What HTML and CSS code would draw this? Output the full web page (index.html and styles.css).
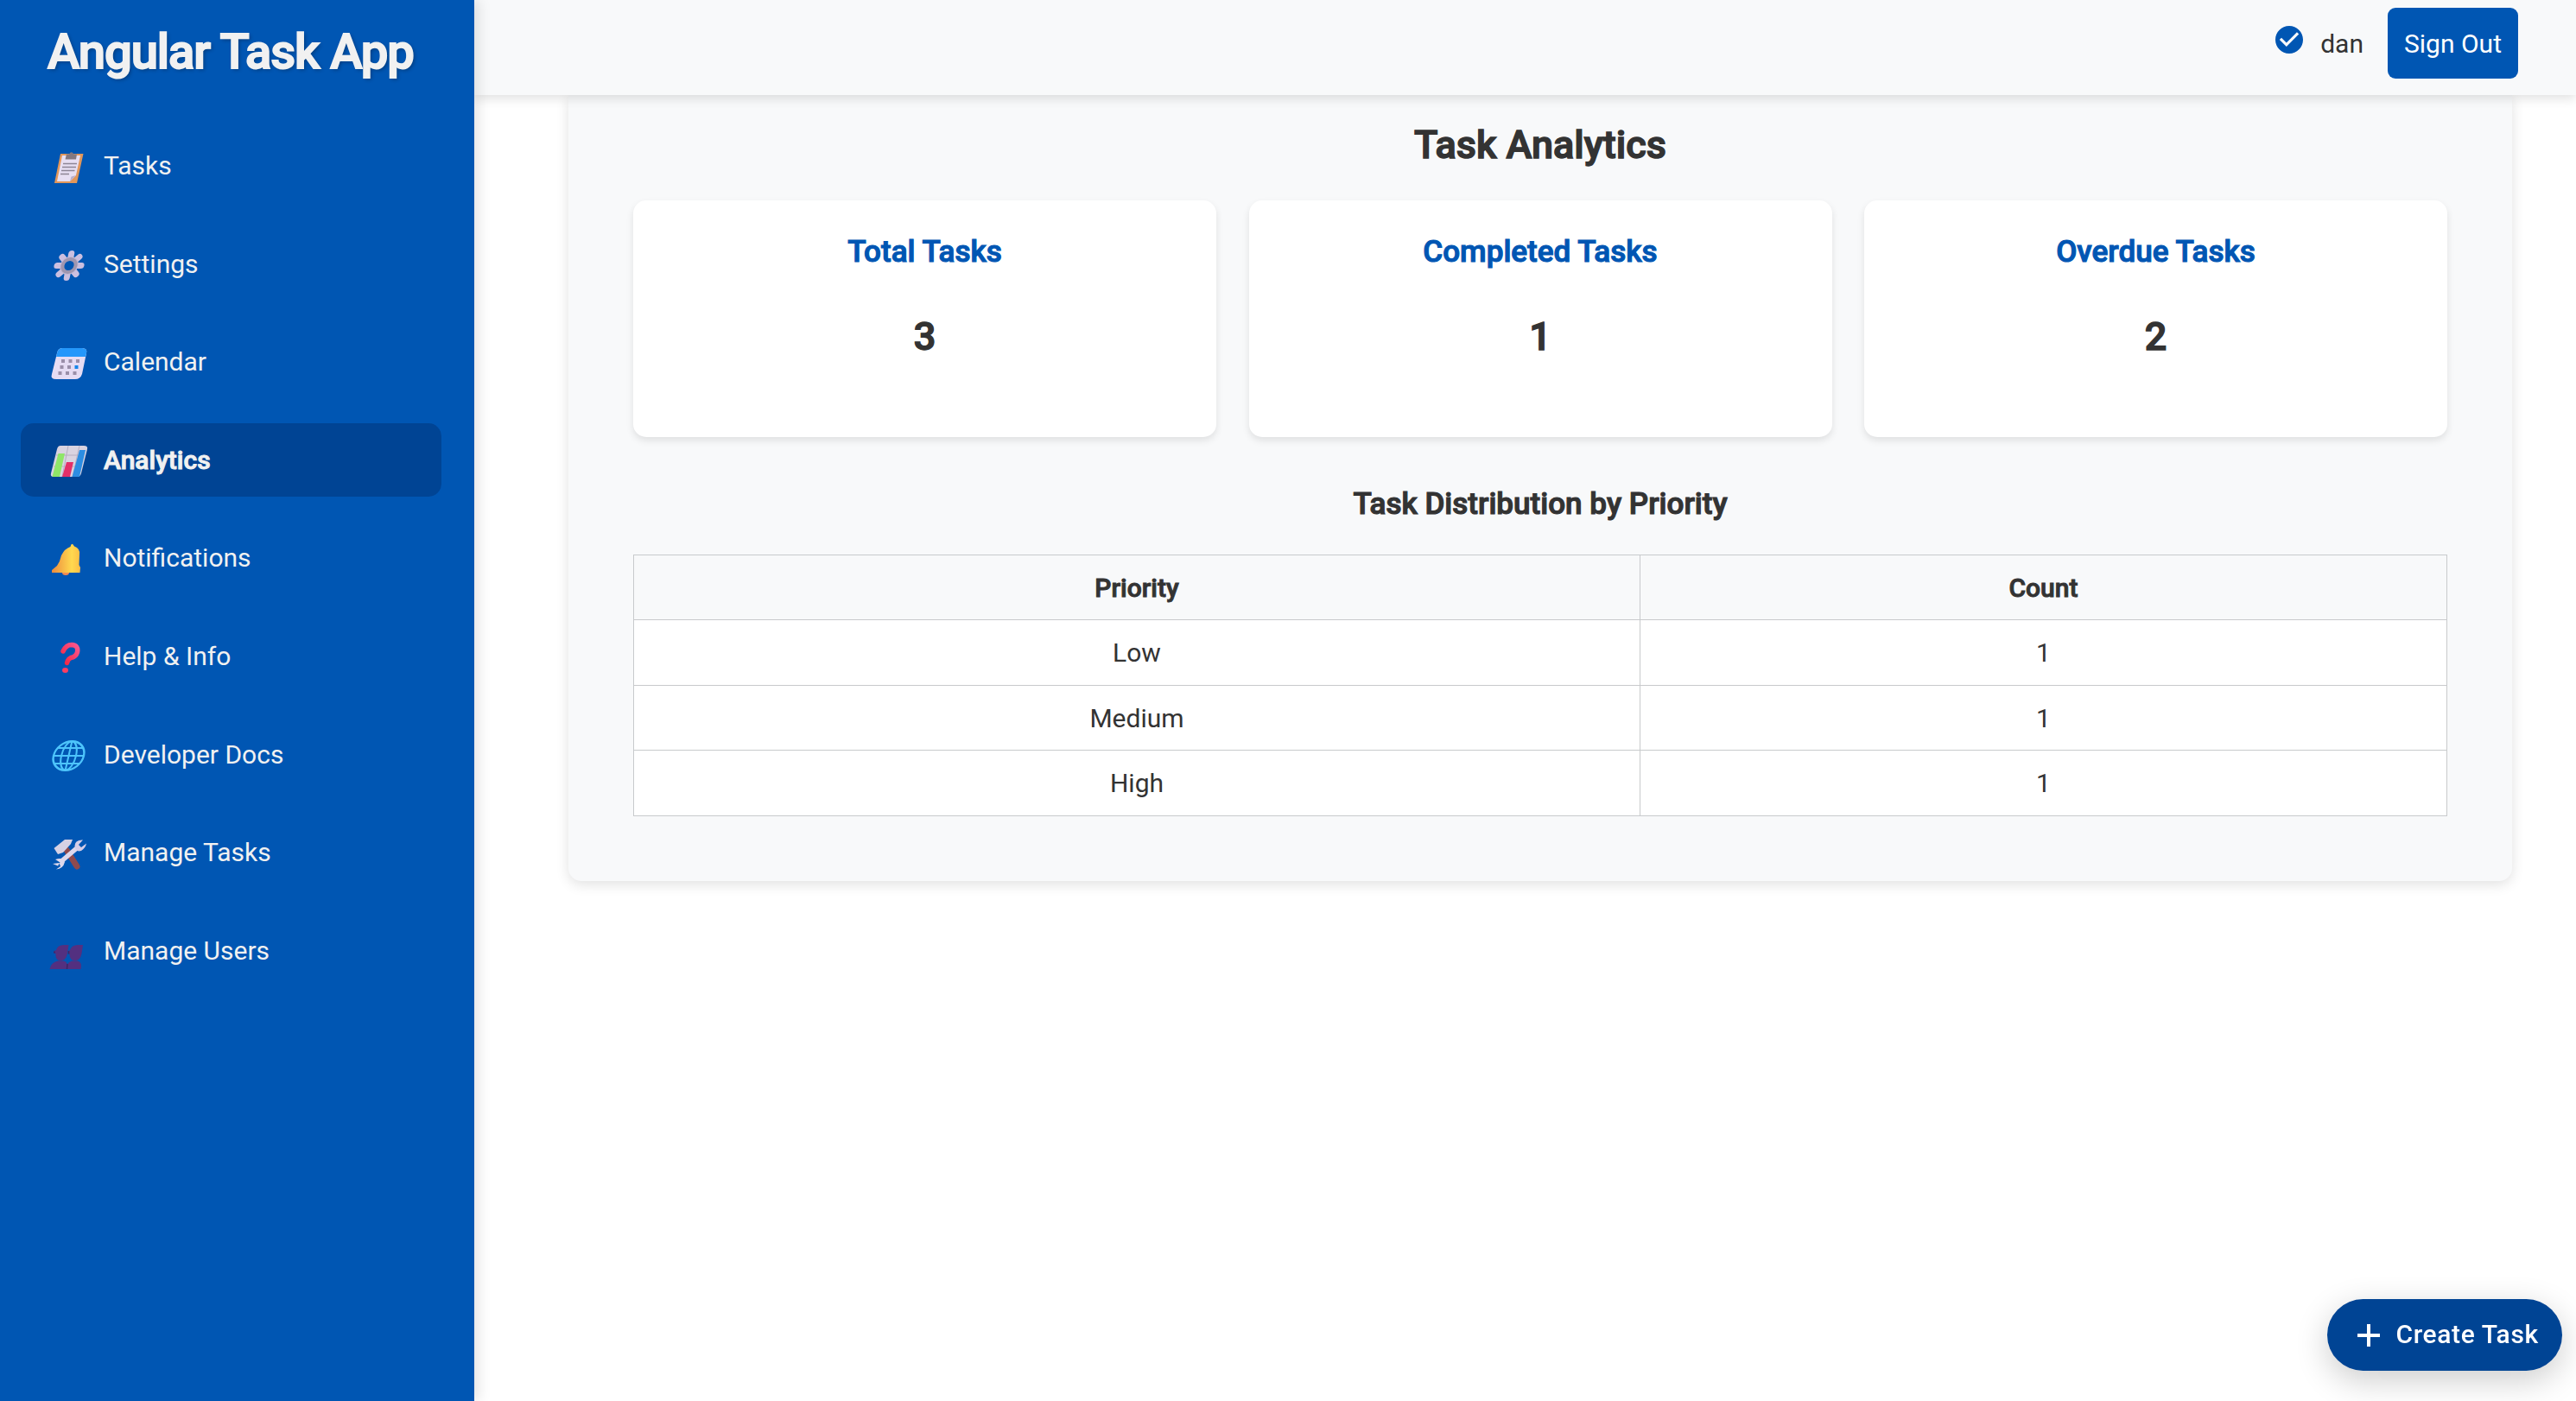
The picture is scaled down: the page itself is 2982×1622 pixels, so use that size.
FILE: index.html
```html
<!DOCTYPE html>
<html lang="en">
<head>
<meta charset="utf-8">
<title>Angular Task App</title>
<link rel="stylesheet" href="styles.css">
</head>
<body>
<div class="app">
  <aside class="sidebar">
    <h1 class="brand">Angular Task App</h1>
    <nav class="nav">
      <a class="nav-item"><svg class="icon" viewBox="0 0 48 44">
        <path d="M12 6H38.500L31 40H5Z" fill="#e2975a"/><path d="M14 8H35L30 31L23 38H8Z" fill="#e7dff2"/><path d="M30 31L23 38L24.500 32.500Z" fill="#b9aecb"/><path d="M19 6.500H22Q24.500 2 27.500 6.500H31L30 12.500H17.500Z" fill="#85787f"/><path d="M15 17.500H31M14 21.500H30M13 25.500H28.500M12 29.500H22" stroke="#8d8595" stroke-width="1.300"/></svg><span>Tasks</span></a>
      <a class="nav-item"><svg class="icon" viewBox="0 0 48 44">
        <g transform="translate(22 22.500) skewX(-11)"><g stroke="#cbbfe0" stroke-width="7" stroke-linecap="round"><path d="M0-14V14M-14 0H14M-10-10L10 10M10-10L-10 10"/></g><circle r="8" fill="#0056b3" stroke="#c2b8d3" stroke-width="5"/><circle r="7.500" fill="#0056b3" stroke="#9f96b0" stroke-width="4"/></g></svg><span>Settings</span></a>
      <a class="nav-item"><svg class="icon" viewBox="0 0 48 44">
        <path d="M14 4H37Q43.500 4 42 10L37 34Q35 40 29 40H7Q0 40 2 34L8 10Q9 4 14 4Z" fill="#e6dcf3"/><path d="M14 4H37Q43.500 4 42 10L41 14H7L8 10Q9 4 14 4Z" fill="#2497fb"/><path d="M13 19h4M21.500 19h4M30 19h4M11.500 26h4M20 26h4M9.500 33h4M18 33h4M26.500 33h4" stroke="#9b8fa9" stroke-width="4"/><path d="M28.500 26h4" stroke="#1685e9" stroke-width="4"/></svg><span>Calendar</span></a>
      <a class="nav-item active"><svg class="icon" viewBox="0 0 48 44">
        <path d="M12 4H39Q44 4 43 8L36 36Q35 40 31 40H4Q0 40 1 36L8 8Q9 4 12 4Z" fill="#d9d3e0"/><path d="M21 4L14 40M34 4L26 40M7 15H39M4 28H37" stroke="#b7aec1"/><path d="M9.500 13H17L11 40H2.500Z" fill="#8fe668"/><path d="M19 23H27L23 40H14Z" fill="#e42f68"/><path d="M34 9H41L34 40H25.500Z" fill="#2c8de2"/></svg><span>Analytics</span></a>
      <a class="nav-item"><svg class="icon" viewBox="0 0 48 44">
        <defs><linearGradient id="bell" x1="0" x2="1"><stop stop-color="#ec8b3e"/><stop offset=".7" stop-color="#ffd94f"/><stop offset="1" stop-color="#fcbd45"/></linearGradient></defs><ellipse cx="18" cy="37" rx="4" ry="3" fill="#f28a52"/><path d="M23.500 7Q25 1 28 6.500Q35 9 34 16L33.500 28L35 31L34.500 37H2V34L8 29Q11.500 24 13 17Q17 9 23.500 7Z" fill="url(#bell)"/></svg><span>Notifications</span></a>
      <a class="nav-item"><svg class="icon" viewBox="0 0 48 44">
        <defs><linearGradient id="ask" x1="1" x2="0" y2="1"><stop stop-color="#fc5790"/><stop offset="1" stop-color="#ef2540"/></linearGradient></defs><path d="M15 15Q18.500 7.500 25 7.500Q33 8 31.500 16Q30 21.500 24 22.500Q20.500 24 19.500 28.500" fill="none" stroke="url(#ask)" stroke-width="5.500" stroke-linecap="round"/><ellipse cx="17.500" cy="37" rx="3.500" ry="3" fill="#fb3e61"/></svg><span>Help &amp; Info</span></a>
      <a class="nav-item"><svg class="icon" viewBox="0 0 48 44">
        <g transform="translate(21.500 22) skewX(-13)" fill="none" stroke="#4dc4fb" stroke-width="2.100"><ellipse rx="17.500" ry="16.800" stroke-width="2.400"/><ellipse rx="8.500" ry="16.500"/><path d="M0-16.500V16.500M-15-9H15M-17.500 0H17.500M-15 9H15"/></g></svg><span>Developer Docs</span></a>
      <a class="nav-item"><svg class="icon" viewBox="0 0 48 44">
        <path d="M19 17L31 36" stroke="#8e4a4e" stroke-width="7" stroke-linecap="round"/><path d="M4.500 15L17 5H26L24 10L15 20L9 22Z" fill="#d6d1e4"/><path d="M12 31L32 14" stroke="#ddd8ec" stroke-width="5.500"/><path d="M38 5.500Q29 5 28.500 12Q29 20 36 18Q41 15 42 9.500L36 14L33 11Z" fill="#d5cde7"/><path d="M3 33L9 35.500L11.500 31.500L6 28Q15 25 17 31Q15 39 7 39.500L12 36L10.500 32Z" fill="#ddd8ec"/></svg><span>Manage Tasks</span></a>
      <a class="nav-item"><svg class="icon" viewBox="0 0 48 44">
        <g fill="#533080"><path d="M-.500 42Q1 34 9 32.500H16Q21.500 34 19.500 42Z"/><path d="M19 42Q18.500 35 25 32.500H32Q37.500 34 35.500 42Z"/><path d="M7 20Q8.500 14 16 14H21.500L20 24Q18.500 32 12 32.500Q5.500 31 6.500 24L4.500 23.500V21Z"/><path d="M23 20Q25 14 32 14H38L36.500 24Q35 32 28.500 32.500Q22 31 22.500 24L21 23.500V21Z"/></g><path d="M19.500 42L20 36M21.500 21V24.500M5 21.500V23.500" stroke="#3d2465" stroke-width="1.500"/></svg><span>Manage Users</span></a>
    </nav>
  </aside>
  <div class="content">
    <header class="topbar">
      <svg class="check" viewBox="2 2 20 20"><path d="M12 2C6.480 2 2 6.480 2 12s4.480 10 10 10 10-4.480 10-10S17.520 2 12 2zm-2 15-5-5 1.410-1.410L10 14.170l7.590-7.590L19 8l-9 9z"/></svg>
      <span class="user">dan</span>
      <button class="signout">Sign Out</button>
    </header>
    <main class="panel">
      <h2 class="title">Task Analytics</h2>
      <section class="cards">
        <article class="card"><h3>Total Tasks</h3><p>3</p></article>
        <article class="card"><h3>Completed Tasks</h3><p>1</p></article>
        <article class="card"><h3>Overdue Tasks</h3><p>2</p></article>
      </section>
      <h3 class="subtitle">Task Distribution by Priority</h3>
      <table class="table">
        <thead><tr><th class="col-priority">Priority</th><th>Count</th></tr></thead>
        <tbody>
          <tr><td>Low</td><td>1</td></tr>
          <tr><td>Medium</td><td>1</td></tr>
          <tr><td>High</td><td>1</td></tr>
        </tbody>
      </table>
    </main>
  </div>
</div>
<button class="fab"><svg class="plus" viewBox="0 0 26 26"><path d="M13 0V26M0 13H26"/></svg><span>Create Task</span></button>
</body>
</html>
```
FILE: styles.css
```css
* { box-sizing: border-box; }
body {
  margin: 0;
  font: 400 30px/1.2 Roboto, sans-serif;
  color: #333;
  background: #fff;
  overflow: hidden;
}
h1, h2, h3, p { margin: 0; }
h1, h2, h3, th, .card p, .nav-item.active {
  font-weight: 500;
  -webkit-text-stroke: .032em currentColor;
}
button { font: inherit; border: 0; }
.app { display: flex; height: 1622px; }

.sidebar {
  position: relative;
  z-index: 3;
  width: 549px;
  flex: none;
  background: #0056b3;
  color: #f1f1f1;
  box-shadow: 4px 0 15px rgba(0, 0, 0, .12);
}
.brand {
  height: 120px;
  padding-left: 55px;
  font-size: 56.250px;
  line-height: 121px;
  letter-spacing: -1.120px;
  text-shadow: 2px 2px 4px rgba(0, 0, 0, .3);
  white-space: nowrap;
}
.nav {
  display: flex;
  flex-direction: column;
  gap: 28.600px;
  padding: 29px 38px 0 24px;
}
.nav-item {
  display: flex;
  align-items: center;
  height: 85px;
  padding-left: 34px;
  border-radius: 15px;
}
.nav-item span { margin: 1px 0 0 14px; }
.nav-item.active { background: #004494; }
.icon { width: 48px; height: 44px; margin-top: 4px; flex: none; overflow: visible; }

.content { flex: 1; }
.topbar {
  position: relative;
  z-index: 2;
  display: flex;
  justify-content: flex-end;
  height: 110px;
  padding: 9px 67px 0 0;
  background: #f8f9fa;
  box-shadow: 0 4px 12px rgba(0, 0, 0, .12);
}
.check { width: 32px; height: 32px; margin: 21px 20px 0 0; fill: #0056b3; }
.user { margin-right: 28px; line-height: 83px; }
.signout {
  width: 151px;
  height: 82px;
  padding: 1px 0 0;
  border-radius: 9px;
  background: #0056b3;
  color: #fff;
}

.panel {
  margin: 0 74px 0 109px;
  height: 910px;
  padding: 31px 75px 0;
  border-radius: 0 0 15px 15px;
  background: #f8f9fa;
  box-shadow: 0 4px 15px rgba(0, 0, 0, .12);
  text-align: center;
}
.title { font-size: 45px; line-height: 54px; }
.cards {
  display: grid;
  grid-template-columns: repeat(3, 1fr);
  gap: 37.500px;
  margin-top: 37px;
}
.card {
  height: 274px;
  padding-top: 37px;
  border-radius: 15px;
  background: #fff;
  box-shadow: 0 4px 8px rgba(0, 0, 0, .1);
}
.card h3 { font-size: 35.100px; line-height: 44px; color: #0056b3; }
.card p { margin-top: 50px; font-size: 45px; line-height: 54px; }
.subtitle { margin-top: 55px; font-size: 35.100px; line-height: 44px; }
.table {
  width: 100%;
  margin-top: 37px;
  border-collapse: collapse;
  table-layout: fixed;
  background: #fff;
}
.table th, .table td { height: 75px; padding: 1px 0 0; border: 1px solid #c8cacc; }
.table tbody tr:nth-child(odd) td { height: 76px; }
.table th { background: #f8f9fa; }
.col-priority { width: 1165px; }

.fab {
  position: fixed;
  right: 16px;
  bottom: 35px;
  display: flex;
  align-items: center;
  width: 272px;
  height: 83px;
  padding: 0 0 0 35px;
  border-radius: 42px;
  background: #004494;
  color: #fff;
  font-weight: 500;
  letter-spacing: .6px;
  white-space: nowrap;
  box-shadow: 0 11px 38px rgba(0, 0, 0, .2);
}
.fab span { margin-top: -1px; }
.plus { width: 26px; height: 26px; margin-right: 18.500px; stroke: #fff; stroke-width: 4; }
```
